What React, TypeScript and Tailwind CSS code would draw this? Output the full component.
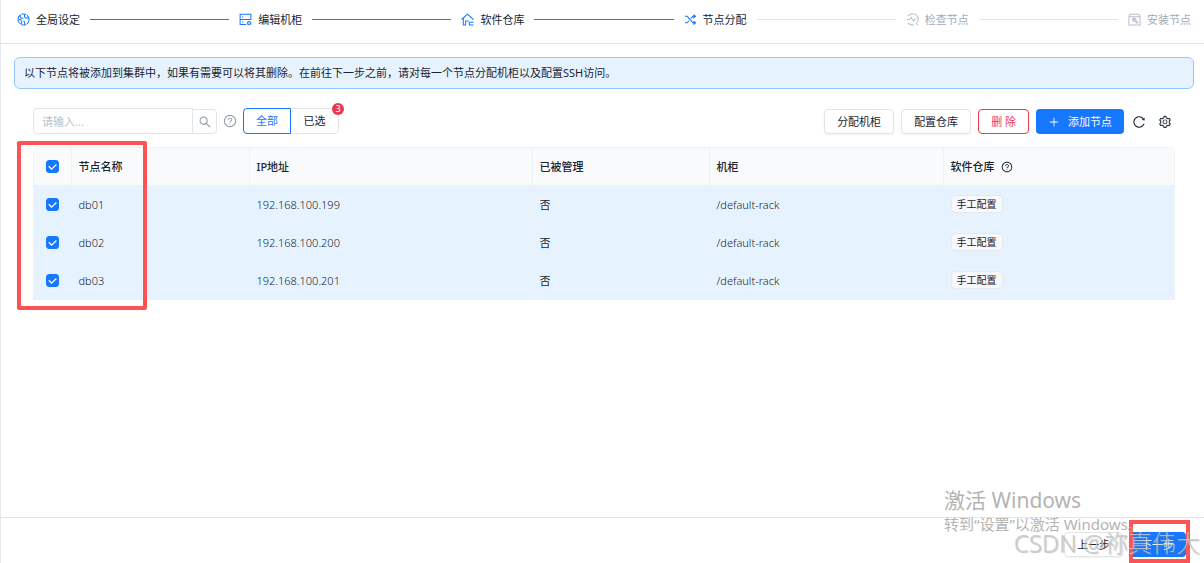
import { useState } from 'react';
import type { ReactNode } from 'react';
import { AiOutlinePlus, AiOutlineQuestionCircle, AiOutlineReload, AiOutlineSearch, AiOutlineSetting } from 'react-icons/ai';

type Step = {
  title: string;
  icon: ReactNode;
};

type Node = {
  name: string;
  ip: string;
  managed: string;
  rack: string;
};

const nodes: Node[] = [
  { name: 'db01', ip: '192.168.100.199', managed: '否', rack: '/default-rack' },
  { name: 'db02', ip: '192.168.100.200', managed: '否', rack: '/default-rack' },
  { name: 'db03', ip: '192.168.100.201', managed: '否', rack: '/default-rack' }
];

const steps: Step[] = [
  {
    title: '全局设定',
    icon: (
      <>
        <circle cx="7" cy="7" r="6" strokeDasharray="5.4 0.9" />
        <path d="M3 2.5l1 2.6 2.6.8M1 6.6l3.2.6 1 3.2-1 1.6M8.2 1.4 8 4.2l2.2 1.4 2.4-.4M8.2 12.6V9.8L7 8.6" />
      </>
    )
  },
  {
    title: '编辑机柜',
    icon: (
      <>
        <path d="M7.6 12.4H1.2V1.4h11.6v6.2M1.2 7h11.6M3.2 4.2h1.4M3.2 9.7h1.4" />
        <circle cx="10.8" cy="10.8" r="1.5" />
        <path d="M10.8 8.4v.9M10.8 12.3v1M8.4 9.6l.9.4M12.3 11.6l1 .5M8.4 12.1l.9-.5M12.3 10l1-.4" />
      </>
    )
  },
  {
    title: '软件仓库',
    icon: <path d="M.7 7 7 1.2 13.3 7M2.5 6v7H5V8.6h3.2M8.6 10h4.8M8.6 12.8h4.8M8.8 10v2.8" />
  },
  {
    title: '节点分配',
    icon: (
      <>
        <path d="M1 3.6h2.4L9.6 10.6h1.6M1 10.6h2.4l2-2.2M7.4 5.8l2.2-2.2h1.6" />
        <path d="M10.4 1.6 13 3.6l-2.6 2zM10.4 8.6l2.6 2-2.6 2z" fill="currentColor" strokeWidth="0.6" />
      </>
    )
  },
  {
    title: '检查节点',
    icon: <path d="M2.2 3.4A6 6 0 1 1 11 11.4L13 13M8.8 12.6A6 6 0 0 1 2 10.4M.8 7h2.8l1.8-2.2 2.8 4L10 6.4h1" />
  },
  {
    title: '安装节点',
    icon: (
      <>
        <path d="M1 4h12v9H1zM2 1.3h10M1 4l1-2.7M13 4l-1-2.7" />
        <path d="M5 6.3a2 2 0 0 0 2.8 2.4L9.7 11l.8-.8-2.2-1.9A2 2 0 0 0 6.2 5.5l.7 1.3-.8.7z" />
      </>
    )
  }
];

const CURRENT_STEP = 3;

const outlineButton = 'h-[25px] rounded border border-[#e3e5ea] bg-white px-3 text-[#1a2332] shadow-xs';

function Steps() {
  return (
    <ol className="flex h-11 items-center border-b border-[#e3e5e8] pr-[13px] pb-1 pl-4">
      {steps.map((step, i) => {
        const reached = i <= CURRENT_STEP;
        const last = i === steps.length - 1;
        return (
          <li key={step.title} className={last ? 'flex items-center' : 'flex flex-1 items-center'}>
            <svg
              viewBox="0 0 14 14"
              className={reached ? 'size-[13px] shrink-0 text-[#1677ff]' : 'size-[13px] shrink-0 text-[#b8bfcc]'}
              fill="none"
              stroke="currentColor"
              strokeWidth="1.1"
              aria-hidden="true"
            >
              {step.icon}
            </svg>
            <span className={reached ? 'ml-1.5 whitespace-nowrap text-[#1a2332]' : 'ml-1.5 whitespace-nowrap text-[#a0aabb]'}>
              {step.title}
            </span>
            {!last && <span className={i < CURRENT_STEP ? 'mx-2.5 h-px flex-1 bg-[#1677ff]' : 'mx-2.5 h-px flex-1 bg-[#e3e5e8]'} />}
          </li>
        );
      })}
    </ol>
  );
}

function Checkbox({ label, checked, onChange }: { label: string; checked: boolean; onChange: () => void }) {
  return (
    <label className="relative mx-auto flex size-[13px] items-center justify-center">
      <input
        type="checkbox"
        aria-label={label}
        checked={checked}
        onChange={onChange}
        className="peer size-[13px] appearance-none rounded-[3px] border border-[#d0d5dd] bg-white checked:border-[#1677ff] checked:bg-[#1677ff]"
      />
      <svg
        viewBox="0 0 14 14"
        className="pointer-events-none absolute inset-0 hidden size-[13px] text-white peer-checked:block"
        fill="none"
        stroke="currentColor"
        strokeWidth="1.4"
        aria-hidden="true"
      >
        <path d="M3 6.8l3 3L11.2 4.8" />
      </svg>
    </label>
  );
}

function Toolbar({ filter, setFilter, count }: { filter: string; setFilter: (f: string) => void; count: number }) {
  return (
    <div className="flex items-end justify-between">
      <div className="flex items-center">
        <div className="flex items-end">
          <input
            type="text"
            aria-label="搜索节点"
            placeholder="请输入..."
            className="h-6.5 w-40 rounded-l border border-[#e3e5ea] bg-white px-2 outline-none placeholder:text-[#b8bfcc]"
          />
          <button
            type="button"
            aria-label="搜索"
            className="-ml-px flex h-[25px] w-[25px] items-center justify-center rounded-r border border-[#e3e5ea] text-[#8d97a8]"
          >
            <AiOutlineSearch className="size-3.5" />
          </button>
        </div>
        <AiOutlineQuestionCircle className="ml-1.5 size-3.5 text-[#8d97a8]" />
        <div className="relative ml-1.5 flex">
          <button
            type="button"
            onClick={() => setFilter('all')}
            className={
              filter === 'all'
                ? 'z-10 h-6.5 w-12 rounded-l border border-[#1677ff] text-[#1677ff]'
                : 'h-6.5 w-12 rounded-l border border-[#e3e5ea]'
            }
          >
            全部
          </button>
          <button
            type="button"
            onClick={() => setFilter('selected')}
            className={
              filter === 'selected'
                ? 'z-10 -ml-px h-6.5 w-[49px] rounded-r border border-[#1677ff] text-[#1677ff]'
                : '-ml-px h-6.5 w-[49px] rounded-r border border-[#e3e5ea]'
            }
          >
            已选
          </button>
          <span className="absolute -top-[5px] -right-[5px] flex size-3 items-center justify-center rounded-full bg-[#e8384f] text-[9px] leading-3 text-white">
            {count}
          </span>
        </div>
      </div>

      <div className="flex items-center gap-[7px] pr-[3px]">
        <button type="button" className={outlineButton}>
          分配机柜
        </button>
        <button type="button" className={outlineButton}>
          配置仓库
        </button>
        <button type="button" className="h-[25px] rounded border border-[#f0384f] bg-white px-3 text-[#f0384f]">
          删 除
        </button>
        <button type="button" className="flex h-[25px] items-center gap-2 rounded bg-[#1677ff] px-3 text-white">
          <AiOutlinePlus className="size-3" />
          添加节点
        </button>
        <div className="ml-px flex items-center gap-3">
          <button type="button" aria-label="刷新">
            <AiOutlineReload className="size-3.5" />
          </button>
          <button type="button" aria-label="设置">
            <AiOutlineSetting className="size-3.5" />
          </button>
        </div>
      </div>
    </div>
  );
}

export default function App() {
  const [filter, setFilter] = useState('all');
  const [selected, setSelected] = useState<string[]>(nodes.map((n) => n.name));

  const toggle = (name: string) =>
    setSelected((prev) => (prev.includes(name) ? prev.filter((n) => n !== name) : [...prev, name]));
  const toggleAll = () => setSelected(selected.length === nodes.length ? [] : nodes.map((n) => n.name));

  const visible = filter === 'all' ? nodes : nodes.filter((n) => selected.includes(n.name));

  return (
    <div className="relative flex min-h-screen flex-col overflow-hidden border-l border-[#e6e8ee] bg-white font-['Noto_Sans','Noto_Sans_CJK_SC',sans-serif] text-[11px] leading-4 text-[#1a2332]">
      <Steps />

      <main className="flex-1">
        <div className="mt-[13px] mr-2.5 ml-[13px] rounded-md border border-[#91caff] bg-[#e6f3ff] px-[9px] py-[7px]">
          以下节点将被添加到集群中，如果有需要可以将其删除。在前往下一步之前，请对每一个节点分配机柜以及配置SSH访问。
        </div>

        <div className="mt-[19px] mr-[29px] ml-8">
          <Toolbar filter={filter} setFilter={setFilter} count={selected.length} />

          <div className="relative mt-[13px]">
            <div className="overflow-hidden rounded-t-md border border-b-0 border-[#f0f1f3]">
              <table className="w-full table-fixed border-collapse text-left">
                <colgroup>
                  <col className="w-[37px]" />
                  <col className="w-[178px]" />
                  <col className="w-[283px]" />
                  <col className="w-[177px]" />
                  <col className="w-[234px]" />
                  <col />
                </colgroup>
                <thead>
                  <tr className="h-[37px] bg-[#f9fafc] [&>th]:border-r [&>th]:border-b [&>th]:border-[#eff1f4] [&>th]:px-[7px] [&>th]:font-medium [&>th:last-child]:border-r-0 [&>th:not(:first-child)]:pt-0.5">
                    <th>
                      <Checkbox label="全选" checked={selected.length === nodes.length} onChange={toggleAll} />
                    </th>
                    <th>节点名称</th>
                    <th>IP地址</th>
                    <th>已被管理</th>
                    <th>机柜</th>
                    <th>
                      <span className="flex items-center gap-1.5">
                        软件仓库
                        <AiOutlineQuestionCircle className="size-3" />
                      </span>
                    </th>
                  </tr>
                </thead>
                <tbody>
                  {visible.map((n) => (
                    <tr
                      key={n.name}
                      className={
                        selected.includes(n.name)
                          ? 'h-[38px] bg-[#e6f3ff] [&>td]:border-r [&>td]:border-b [&>td]:border-[#e9f1f9] [&>td]:px-[7px] [&>td:last-child]:border-r-0'
                          : 'h-[38px] bg-white [&>td]:border-r [&>td]:border-b [&>td]:border-[#eff1f4] [&>td]:px-[7px] [&>td:last-child]:border-r-0'
                      }
                    >
                      <td>
                        <Checkbox label={n.name} checked={selected.includes(n.name)} onChange={() => toggle(n.name)} />
                      </td>
                      <td className="pt-0.5 font-light">{n.name}</td>
                      <td className="pt-0.5 font-light">{n.ip}</td>
                      <td className="pt-0.5">{n.managed}</td>
                      <td className="pt-0.5 font-light">{n.rack}</td>
                      <td>
                        <span className="inline-block rounded-sm border border-[#e6e8ee] bg-[#f7f8fb] px-[5px] text-[10px]">手工配置</span>
                      </td>
                    </tr>
                  ))}
                </tbody>
              </table>
            </div>
            <div className="pointer-events-none absolute -top-1.5 -left-4 h-[169px] w-[130px] rounded-xs border-4 border-[#ff5252]" />
          </div>
        </div>
      </main>

      <footer className="flex h-[46px] items-center justify-end gap-1.5 border-t border-[#e3e5e8] pt-2 pr-[18px]">
        <button type="button" className={outlineButton}>
          上一步
        </button>
        <div className="relative">
          <button type="button" className="h-[25px] rounded bg-[#1677ff] px-3 text-white">
            下一步
          </button>
          <div className="pointer-events-none absolute -top-3 -right-1 -bottom-1.5 left-0 border-4 border-[#ff5252]" />
        </div>
      </footer>

      <div className="pointer-events-none absolute right-[62px] bottom-[29px] w-[198px] whitespace-nowrap text-[#b4b4b4]">
        <p className="text-[21px] leading-7">激活 Windows</p>
        <p className="text-[15px] leading-5">转到“设置”以激活 Windows。</p>
      </div>
      <div className="pointer-events-none absolute right-1 bottom-1 whitespace-nowrap text-[24px] leading-8 font-light text-[#c8c8c8]/85 [text-shadow:1px_1px_1px_#8888]">
        CSDN @祢真伟大
      </div>
    </div>
  );
}
